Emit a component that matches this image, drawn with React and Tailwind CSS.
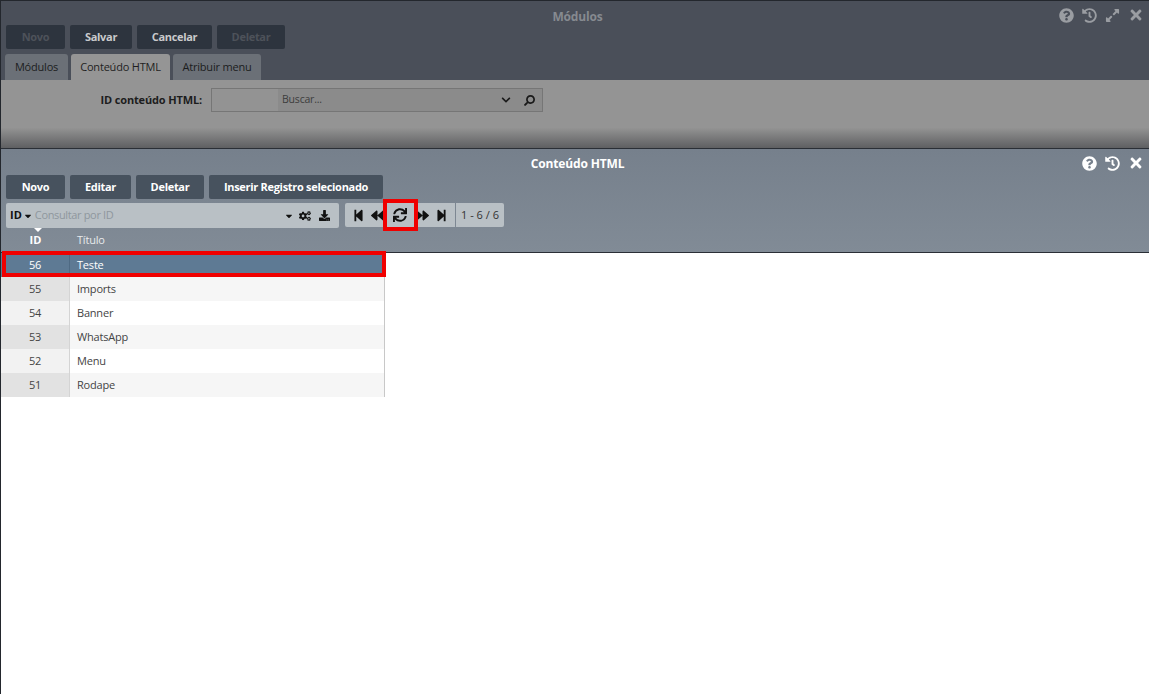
import { FaQuestionCircle, FaHistory, FaExpandAlt, FaTimes, FaChevronDown, FaSearch, FaCaretDown, FaCogs, FaDownload, FaStepBackward, FaStepForward, FaBackward, FaForward, FaSync } from 'react-icons/fa';

const rows = [
  { id: 55, title: 'Imports' },
  { id: 54, title: 'Banner' },
  { id: 53, title: 'WhatsApp' },
  { id: 52, title: 'Menu' },
  { id: 51, title: 'Rodape' },
];

const DarkButton = ({ children, className }) => (
  <button className={`h-6 rounded-[2px] text-[11px] font-bold tracking-[-0.3px] ${className}`}>{children}</button>
);

const Tab = ({ children, active, className }) => (
  <div
    className={`flex items-center justify-center h-[26px] rounded-t-[3px] text-[11px] tracking-[-0.2px] ${
      active ? 'bg-[#959595] text-[#1f1f1f]' : 'bg-[#6b7077] text-[#1b1d20]'
    } ${className}`}
  >
    {children}
  </div>
);

const App = () => {
  return (
    <div className="relative w-[1149px] h-[694px] overflow-hidden bg-white border-l border-[#23272d] font-['Open_Sans',sans-serif]">
      {/* Janela de tras (escurecida) */}
      <div className="h-[148px] flex flex-col bg-[#949494] border-t border-[#23272d]">
        <div className="bg-[#4a4f59] h-[79px] pl-[5px]">
          <div className="relative h-6 flex items-center justify-center pt-[7px] text-[12px] font-bold tracking-[-0.15px] text-[#868a90]">
            Módulos
            <div className="absolute right-[5px] top-[6px] flex items-center gap-[8px] text-[#9a9da2] text-[15px]">
              <FaQuestionCircle />
              <FaHistory />
              <FaExpandAlt />
              <FaTimes className="text-[16px]" />
            </div>
          </div>
          <div className="flex gap-[5px]">
            <DarkButton className="w-[59px] bg-[#2d343e] text-[#4d525a]">Novo</DarkButton>
            <DarkButton className="w-[62px] bg-[#2d343e] text-[#c9cacc]">Salvar</DarkButton>
            <DarkButton className="w-[75px] bg-[#2d343e] text-[#c9cacc]">Cancelar</DarkButton>
            <DarkButton className="w-[68px] bg-[#2d343e] text-[#4d525a]">Deletar</DarkButton>
          </div>
          <div className="flex mt-[5px] -ml-[1px] gap-[3px]">
            <Tab className="w-[63px]">Módulos</Tab>
            <Tab active className="w-[99px]">Conteúdo HTML</Tab>
            <Tab className="w-[88px]">Atribuir menu</Tab>
          </div>
        </div>
        <div className="flex-1 bg-gradient-to-b from-[#949494] from-[70%] to-[#5f6062]">
          <div className="flex items-center mt-[8px]">
            <label className="w-[201px] text-right text-[11px] font-bold tracking-[-0.15px] text-[#1d1d1d]">ID conteúdo HTML:</label>
            <div className="ml-[9px] w-[332px] h-6 flex items-center border border-[#767676] bg-[#8b8b8b]">
              <div className="w-[66px] h-full bg-[#939393]" />
              <span className="ml-[4px] flex-1 text-[10.5px] tracking-[-0.2px] text-[#3d3d3d]">Buscar...</span>
              <FaChevronDown className="text-[10px] text-[#1a1a1a] mr-[13px]" />
              <FaSearch className="text-[11px] text-[#1a1a1a] mr-[7px] -scale-x-100" />
            </div>
          </div>
        </div>
      </div>

      {/* Janela da frente */}
      <div className="h-[105px] border-t border-b border-[#2a2f36] bg-gradient-to-b from-[#76808c] to-[#818b96] pl-[5px]">
        <div className="relative h-[26px] flex items-center justify-center pt-[4px] text-[12px] font-bold tracking-[-0.15px] text-white">
          Conteúdo HTML
          <div className="absolute right-[5px] top-[6px] flex items-center gap-[8px] text-white text-[15px]">
            <FaQuestionCircle />
            <FaHistory />
            <FaTimes className="text-[16px]" />
          </div>
        </div>
        <div className="flex gap-[5px]">
          <DarkButton className="w-[59px] bg-[#47525e] text-white">Novo</DarkButton>
          <DarkButton className="w-[61px] bg-[#47525e] text-white">Editar</DarkButton>
          <DarkButton className="w-[68px] bg-[#47525e] text-white">Deletar</DarkButton>
          <DarkButton className="w-[174px] bg-[#47525e] text-white">Inserir Registro selecionado</DarkButton>
        </div>
        <div className="flex mt-[4px]">
          <div className="w-[333px] h-[25px] rounded-[2px] bg-[#b9c0c5] flex items-center pl-1 pr-[9px] text-[#111]">
            <span className="text-[11px] font-bold">ID</span>
            <FaCaretDown className="text-[10px] ml-[1px]" />
            <span className="ml-[2px] flex-1 text-[11px] tracking-[-0.35px] text-[#8f979e]">Consultar por ID</span>
            <FaCaretDown className="text-[10px] mr-[5px]" />
            <FaCogs className="text-[12px] mr-[8px]" />
            <FaDownload className="text-[11px]" />
          </div>
          <div className="ml-[6px] w-[110px] h-6 rounded-l-[2px] bg-[#b9c0c5] flex items-center pl-[7px] text-[#111]">
            <FaStepBackward className="text-[13px]" />
            <FaBackward className="text-[13px] ml-[6px]" />
            <FaSync className="text-[14px] ml-[9px]" />
            <FaForward className="text-[13px] ml-[9px]" />
            <FaStepForward className="text-[13px] ml-[6px]" />
          </div>
          <div className="ml-[1px] w-[48px] h-6 rounded-r-[2px] bg-[#b9c0c5] flex items-center justify-center text-[11px] text-[#333]">
            1 - 6 / 6
          </div>
        </div>
        <div className="relative flex h-[24px] -ml-[5px] items-center text-[11px] text-white">
          <div className="absolute left-[33px] top-0 border-x-[4px] border-x-transparent border-t-[4px] border-t-white" />
          <span className="w-[69px] pt-[1px] text-center font-bold">ID</span>
          <span className="pl-[7px] pt-[1px] tracking-[-0.2px] text-[#e8eaec]">Título</span>
        </div>
      </div>

      {/* Tabela */}
      <div className="w-[384px] border-r border-[#c8c8c8] text-[11px] tracking-[-0.2px] text-[#444]">
        <div className="flex h-6 items-center bg-[#5e7a94] text-white">
          <div className="w-[69px] h-full flex items-center justify-center border-r border-[#4f6a83]">56</div>
          <div className="pl-[7px]">Teste</div>
        </div>
        {rows.map((row, i) => (
          <div key={row.id} className={`flex h-6 items-center ${i % 2 === 0 ? 'bg-[#f6f6f6]' : 'bg-white'}`}>
            <div className={`w-[69px] h-full flex items-center justify-center border-r border-[#d4d4d4] ${i % 2 === 0 ? 'bg-[#e2e2e2]' : 'bg-[#f2f2f2]'}`}>
              {row.id}
            </div>
            <div className="pl-[7px]">{row.title}</div>
          </div>
        ))}
      </div>

      {/* Destaques em vermelho */}
      <div className="absolute left-[1px] top-[251px] w-[384px] h-[26px] border-4 border-[#f00000]" />
      <div className="absolute left-[382px] top-[199px] w-[35px] h-[32px] border-4 border-[#f00000]" />
    </div>
  );
};

export default App;
